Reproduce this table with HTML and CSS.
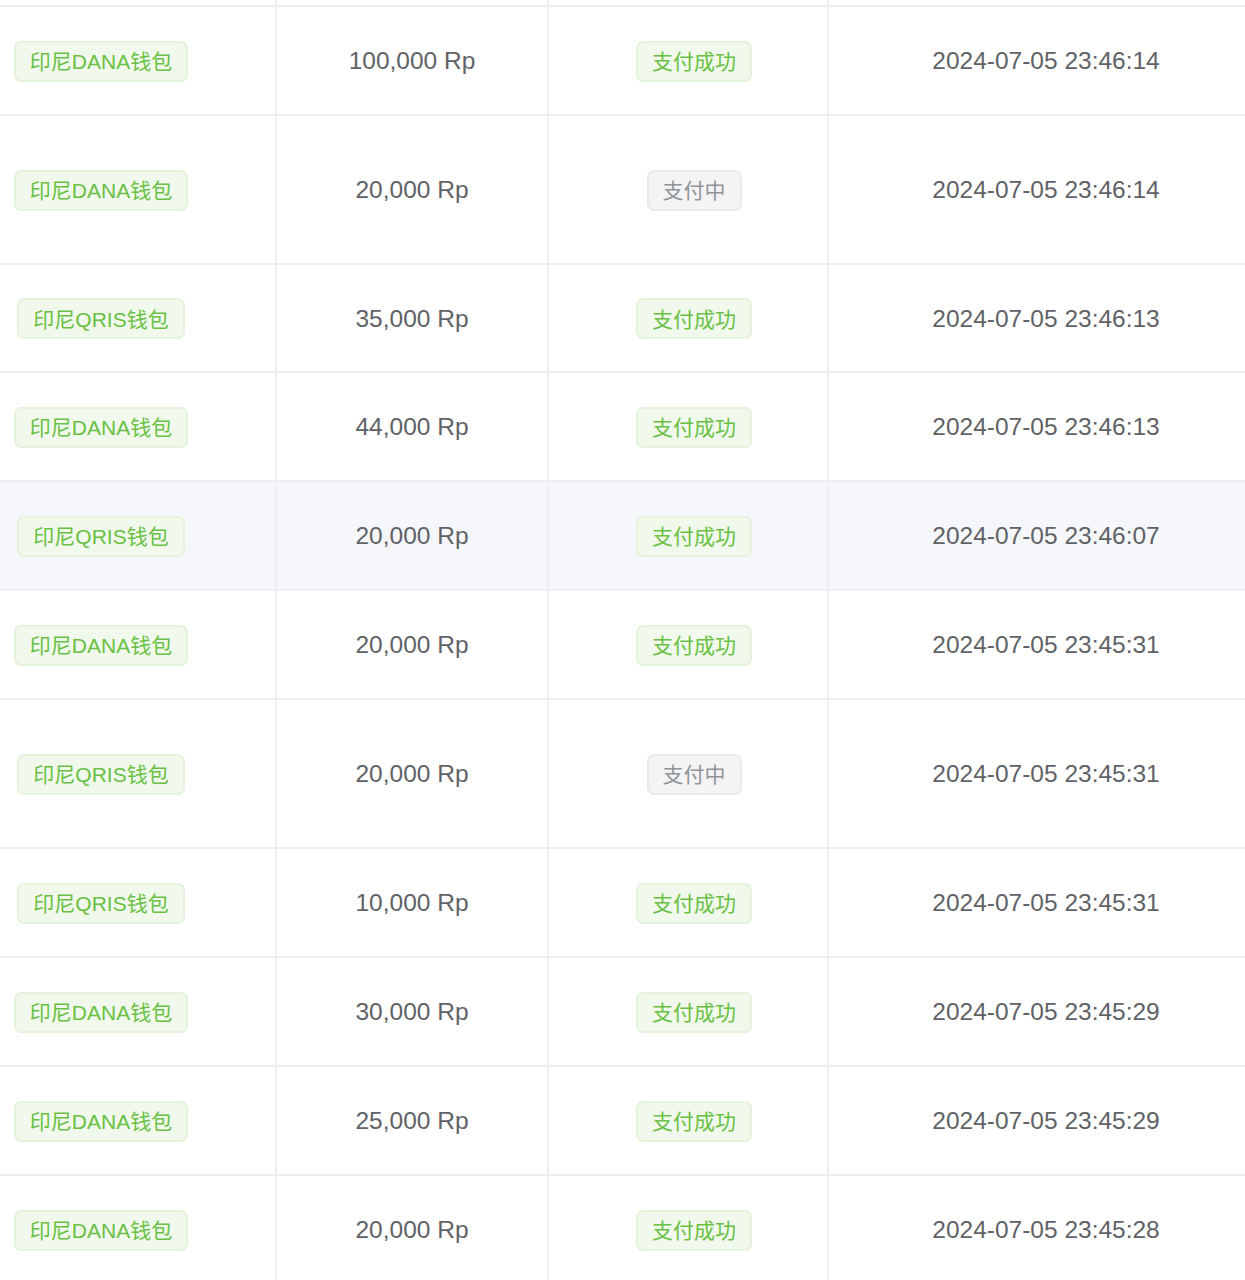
FILE: index.html
```html
<!DOCTYPE html>
<html lang="zh-CN">
<head>
<meta charset="utf-8">
<title>订单列表</title>
<link rel="stylesheet" href="styles.css">
</head>
<body>
<div class="table">
  <div class="row stub"><div class="cell"></div><div class="cell"></div><div class="cell"></div><div class="cell"></div></div>

  <div class="row">
    <div class="cell c1"><span class="tag ok">印尼DANA钱包</span></div>
    <div class="cell">100,000 Rp</div>
    <div class="cell c3"><span class="tag ok">支付成功</span></div>
    <div class="cell c4">2024-07-05 23:46:14</div>
  </div>
  <div class="row tall">
    <div class="cell c1"><span class="tag ok">印尼DANA钱包</span></div>
    <div class="cell">20,000 Rp</div>
    <div class="cell c3"><span class="tag info">支付中</span></div>
    <div class="cell c4">2024-07-05 23:46:14</div>
  </div>
  <div class="row short">
    <div class="cell c1"><span class="tag ok">印尼QRIS钱包</span></div>
    <div class="cell">35,000 Rp</div>
    <div class="cell c3"><span class="tag ok">支付成功</span></div>
    <div class="cell c4">2024-07-05 23:46:13</div>
  </div>
  <div class="row">
    <div class="cell c1"><span class="tag ok">印尼DANA钱包</span></div>
    <div class="cell">44,000 Rp</div>
    <div class="cell c3"><span class="tag ok">支付成功</span></div>
    <div class="cell c4">2024-07-05 23:46:13</div>
  </div>
  <div class="row hover">
    <div class="cell c1"><span class="tag ok">印尼QRIS钱包</span></div>
    <div class="cell">20,000 Rp</div>
    <div class="cell c3"><span class="tag ok">支付成功</span></div>
    <div class="cell c4">2024-07-05 23:46:07</div>
  </div>
  <div class="row">
    <div class="cell c1"><span class="tag ok">印尼DANA钱包</span></div>
    <div class="cell">20,000 Rp</div>
    <div class="cell c3"><span class="tag ok">支付成功</span></div>
    <div class="cell c4">2024-07-05 23:45:31</div>
  </div>
  <div class="row tall">
    <div class="cell c1"><span class="tag ok">印尼QRIS钱包</span></div>
    <div class="cell">20,000 Rp</div>
    <div class="cell c3"><span class="tag info">支付中</span></div>
    <div class="cell c4">2024-07-05 23:45:31</div>
  </div>
  <div class="row">
    <div class="cell c1"><span class="tag ok">印尼QRIS钱包</span></div>
    <div class="cell">10,000 Rp</div>
    <div class="cell c3"><span class="tag ok">支付成功</span></div>
    <div class="cell c4">2024-07-05 23:45:31</div>
  </div>
  <div class="row">
    <div class="cell c1"><span class="tag ok">印尼DANA钱包</span></div>
    <div class="cell">30,000 Rp</div>
    <div class="cell c3"><span class="tag ok">支付成功</span></div>
    <div class="cell c4">2024-07-05 23:45:29</div>
  </div>
  <div class="row">
    <div class="cell c1"><span class="tag ok">印尼DANA钱包</span></div>
    <div class="cell">25,000 Rp</div>
    <div class="cell c3"><span class="tag ok">支付成功</span></div>
    <div class="cell c4">2024-07-05 23:45:29</div>
  </div>
  <div class="row">
    <div class="cell c1"><span class="tag ok">印尼DANA钱包</span></div>
    <div class="cell">20,000 Rp</div>
    <div class="cell c3"><span class="tag ok">支付成功</span></div>
    <div class="cell c4">2024-07-05 23:45:28</div>
  </div>
</div>
</body>
</html>
```

FILE: styles.css
```css
* {
  box-sizing: border-box;
}

html, body {
  margin: 0;
  padding: 0;
  background: #ffffff;
  overflow: hidden;
}

body {
  width: 1245px;
  height: 1280px;
  font-family: "Liberation Sans", "Noto Sans CJK SC", sans-serif;
  color: #606266;
}

.table {
  width: 1263px;
}

.row {
  display: grid;
  grid-template-columns: 277px 272px 280px 434px;
  height: 109px;
  border-bottom: 2px solid #eceef2;
  background: #ffffff;
}

.row.stub {
  height: 7px;
}

.row.tall {
  height: 149px;
}

.row.short {
  height: 108px;
}

.row.hover {
  background: #f5f7fa;
}

.cell {
  display: flex;
  align-items: center;
  justify-content: center;
  padding-top: 1px;
  border-right: 2px solid #eeeff2;
  font-size: 24.5px;
  color: #606266;
  white-space: nowrap;
}

.row.stub .cell {
  padding-top: 0;
}

.cell:last-child {
  border-right: none;
}

.cell.c1 {
  padding-right: 73px;
}

.cell.c3 {
  padding-left: 12px;
}

.tag {
  display: inline-flex;
  align-items: center;
  height: 41px;
  padding: 1px 14px 0;
  border: 2px solid;
  border-radius: 7px;
  font-size: 21px;
  line-height: 1;
}

.tag.ok {
  color: #6ac044;
  background: #f0f9eb;
  border-color: #e4f3dc;
}

.tag.info {
  color: #909399;
  background: #f4f4f5;
  border-color: #eaeaec;
}
```
